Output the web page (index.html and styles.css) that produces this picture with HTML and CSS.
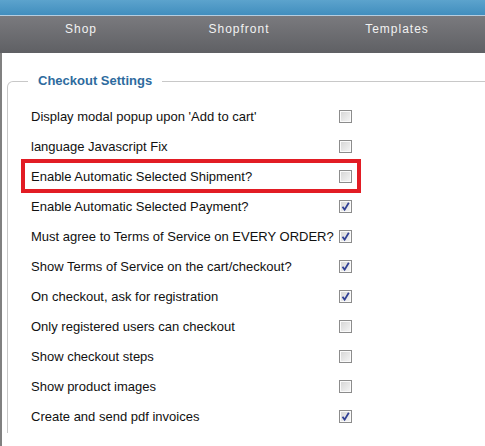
FILE: index.html
```html
<!DOCTYPE html>
<html lang="en">
<head>
    <meta charset="UTF-8">
    <meta name="viewport" content="width=device-width, initial-scale=1.0">
    <title>Checkout Settings</title>
    <link rel="stylesheet" href="styles.css">
</head>
<body>
    <div id="topbar"></div>
    <div id="menu">
        <a href="#">Shop</a>
        <a href="#">Shopfront</a>
        <a href="#">Templates</a>
    </div>

    <div id="page">
        <fieldset class="settings">
            <legend>Checkout Settings</legend>
            <div class="row">
                <label>Display modal popup upon 'Add to cart'</label>
                <span class="box"></span>
            </div>
            <div class="row">
                <label>language Javascript Fix</label>
                <span class="box"></span>
            </div>
            <div class="row marked">
                <label>Enable Automatic Selected Shipment?</label>
                <span class="box"></span>
            </div>
            <div class="row">
                <label>Enable Automatic Selected Payment?</label>
                <span class="box on"><svg viewBox="0 0 11 11"><path d="M2.5 5.8 L4.6 8.6 L8.8 1.8" /></svg></span>
            </div>
            <div class="row">
                <label>Must agree to Terms of Service on EVERY ORDER?</label>
                <span class="box on"><svg viewBox="0 0 11 11"><path d="M2.5 5.8 L4.6 8.6 L8.8 1.8" /></svg></span>
            </div>
            <div class="row">
                <label>Show Terms of Service on the cart/checkout?</label>
                <span class="box on"><svg viewBox="0 0 11 11"><path d="M2.5 5.8 L4.6 8.6 L8.8 1.8" /></svg></span>
            </div>
            <div class="row">
                <label>On checkout, ask for registration</label>
                <span class="box on"><svg viewBox="0 0 11 11"><path d="M2.5 5.8 L4.6 8.6 L8.8 1.8" /></svg></span>
            </div>
            <div class="row">
                <label>Only registered users can checkout</label>
                <span class="box"></span>
            </div>
            <div class="row">
                <label>Show checkout steps</label>
                <span class="box"></span>
            </div>
            <div class="row">
                <label>Show product images</label>
                <span class="box"></span>
            </div>
            <div class="row">
                <label>Create and send pdf invoices</label>
                <span class="box on"><svg viewBox="0 0 11 11"><path d="M2.5 5.8 L4.6 8.6 L8.8 1.8" /></svg></span>
            </div>
        </fieldset>
    </div>
</body>
</html>
```

FILE: styles.css
```css
*{
    font-family: 'Liberation Sans', Arial, sans-serif;
    margin: 0;
    box-sizing: border-box;
}
body{
    background-color: white;
    height: 446px;
    overflow: hidden;
}
#topbar{
    height: 16px;
    background: linear-gradient(#5ca3cd, #418ebe);
    border-bottom: 1px solid #b5cde0;
}
#menu{
    height: 37px;
    background: linear-gradient(#7a7a7e, #5f6064);
    display: grid;
    grid-template-columns: 158px 158px 158px;
    padding-left: 2px;
}
#menu a{
    text-decoration: none;
    color: #f2f2f2;
    font-size: 12px;
    letter-spacing: 1px;
    text-align: center;
    padding-top: 6px;
}
#page{
    border-left: 2px solid #808080;
    height: 393px;
    padding-top: 20px;
    padding-left: 5px;
    overflow: hidden;
}
.settings{
    width: 560px;
    border: 1px solid #c8c8c8;
    border-bottom: none;
    border-radius: 6px 0 0 0;
    padding: 12px 0 0 15px;
    height: 360px;
}
legend{
    color: #2e6b9e;
    font-size: 13px;
    font-weight: bold;
    margin-left: 5px;
    padding: 0 10px;
    line-height: 16px;
}
.row{
    display: grid;
    grid-template-columns: 308px 13px;
    align-items: center;
    width: 336px;
    height: 30px;
    padding-left: 8px;
    font-size: 13px;
    color: #111;
}
.marked{
    outline: 4px solid #e21c24;
    outline-offset: -2px;
}
.box{
    width: 13px;
    height: 13px;
    border: 1px solid #8c8c8c;
    box-shadow: inset 0 0 0 1px #fafafa;
    background: linear-gradient(135deg, #d4d4d4, #f6f6f6);
    display: flex;
}
.box svg{
    width: 11px;
    height: 11px;
}
.box path{
    fill: none;
    stroke: #2f3f94;
    stroke-width: 1.8;
}
```
